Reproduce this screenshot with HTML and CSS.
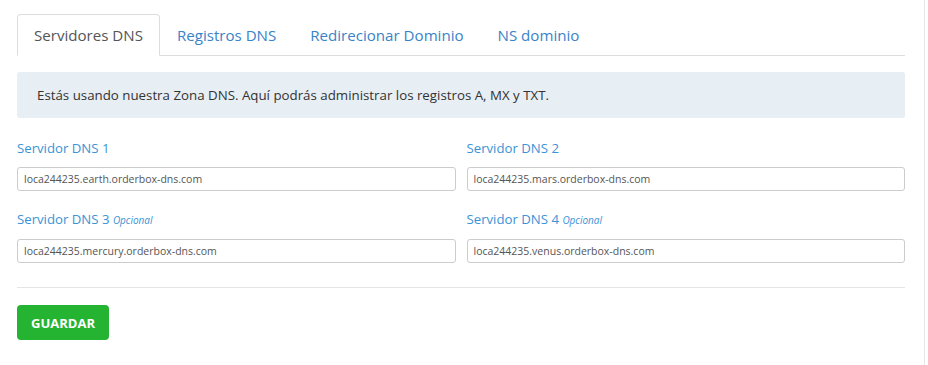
FILE: index.html
```html
<!DOCTYPE html>
<html lang="es">
<head>
  <meta charset="UTF-8">
  <meta name="viewport" content="width=device-width, initial-scale=1.0">
  <title>Servidores DNS</title>
  <link rel="stylesheet" href="styles.css">
</head>
<body>
  <div class="panel">
    <ul class="tabs">
      <li class="tab active"><a href="#">Servidores DNS</a></li>
      <li class="tab"><a href="#">Registros DNS</a></li>
      <li class="tab"><a href="#">Redirecionar Dominio</a></li>
      <li class="tab"><a href="#">NS dominio</a></li>
    </ul>

    <div class="alert">Estás usando nuestra Zona DNS. Aquí podrás administrar los registros A, MX y TXT.</div>

    <form class="dns-form">
      <div class="grid">
        <div class="field">
          <label>Servidor DNS 1</label>
          <input type="text" value="loca244235.earth.orderbox-dns.com">
        </div>
        <div class="field">
          <label>Servidor DNS 2</label>
          <input type="text" value="loca244235.mars.orderbox-dns.com">
        </div>
        <div class="field">
          <label>Servidor DNS 3 <small>Opcional</small></label>
          <input type="text" value="loca244235.mercury.orderbox-dns.com">
        </div>
        <div class="field">
          <label>Servidor DNS 4 <small>Opcional</small></label>
          <input type="text" value="loca244235.venus.orderbox-dns.com">
        </div>
      </div>
      <hr class="divider">
      <button type="button" class="save">Guardar</button>
    </form>
  </div>
</body>
</html>
```

FILE: styles.css
```css
body {
  margin: 0;
  font-family: "Open Sans", "Noto Sans", Arial, sans-serif;
  background: #fff;
  color: #333;
}
.panel {
  width: 888px;
  min-height: 351px;
  padding: 14px 19px 0 17px;
  border-right: 1px solid #e6e6e6;
}
.tabs {
  display: flex;
  list-style: none;
  margin: 0;
  padding: 0;
  border-bottom: 1px solid #dddddd;
}
.tab {
  margin-bottom: -1px;
}
.tab a {
  display: block;
  padding: 0 16px;
  height: 40px;
  line-height: 40px;
  font-size: 15.1px;
  color: #3a83c8;
  text-decoration: none;
  border: 1px solid transparent;
  border-radius: 4px 4px 0 0;
}
.tab.active a {
  color: #555;
  background: #fff;
  border-color: #dddddd;
  border-bottom-color: #fff;
}
.alert {
  margin-top: 16px;
  background: #e7eef4;
  border-radius: 3px;
  padding: 0 20px;
  height: 46px;
  line-height: 46px;
  font-size: 13.3px;
  color: #333;
}
.dns-form {
  margin-top: 21px;
}
.grid {
  display: grid;
  grid-template-columns: 1fr 1fr;
  column-gap: 11px;
  row-gap: 19px;
}
.field label {
  display: block;
  font-size: 13.2px;
  color: #3a93d6;
  line-height: 18px;
  margin-bottom: 10px;
}
.field label small {
  font-size: 10px;
  font-style: italic;
}
.field input {
  display: block;
  width: 100%;
  box-sizing: border-box;
  height: 24px;
  padding: 0 6px;
  font-family: "Open Sans", "Noto Sans", Arial, sans-serif;
  font-size: 10.5px;
  color: #555;
  border: 1px solid #cccccc;
  border-radius: 3px;
  background: #fff;
}
.divider {
  border: 0;
  border-top: 1px solid #e5e5e5;
  margin: 24px 0 17px;
}
.save {
  width: 92px;
  height: 35px;
  border: none;
  border-radius: 4px;
  background: #25b332;
  color: #fff;
  font-family: "Open Sans", "Noto Sans", Arial, sans-serif;
  font-weight: 700;
  font-size: 13px;
  text-transform: uppercase;
  cursor: pointer;
}
```
